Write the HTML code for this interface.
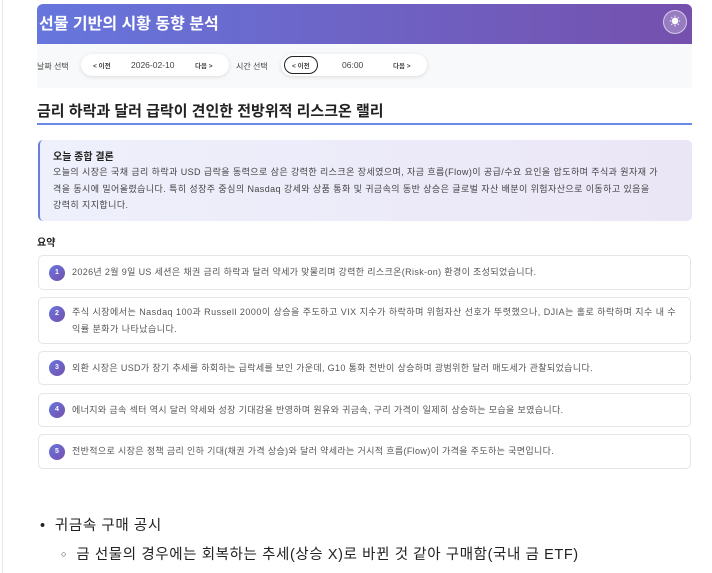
<!DOCTYPE html>
<html><head><meta charset="utf-8"><style>
*{box-sizing:border-box;margin:0;padding:0}
body{width:712px;height:573px;background:#fff;font-family:"Liberation Sans","Noto Sans CJK KR",sans-serif;position:relative;overflow:hidden;color:#333}
.lb{position:absolute;left:2px;top:0;bottom:0;width:1px;background:#e6e6e6}
.hdr{position:absolute;left:37px;top:4px;width:655px;height:40px;background:linear-gradient(90deg,#6676dd,#7550ad);border-radius:6px 6px 0 0;color:#fff;font-size:16px;font-weight:bold;padding:6px 0 0 2px}
.sun{position:absolute;right:5px;top:6px;width:24px;height:24px;border-radius:50%;background:rgba(255,255,255,.25);border:1px solid rgba(255,255,255,.6);color:#fff;font-size:11px;text-align:center;line-height:22px}
.bar{position:absolute;left:37px;top:44px;width:655px;height:44px;background:#f8f9fa;font-size:8px;color:#444}
.pill{position:absolute;top:10px;height:22px;background:#fff;border-radius:11px;box-shadow:0 1px 4px rgba(0,0,0,.12)}
.sm{position:absolute;top:6px;font-size:6.5px;font-weight:bold}
.h2{position:absolute;left:37px;top:100px;width:655px;height:25px;border-bottom:2px solid #6b8ae8;font-size:15px;font-weight:bold;color:#222}
.conc{position:absolute;left:38px;top:140px;width:654px;height:81px;background:linear-gradient(90deg,#eef0fc,#ebe6f6);border-left:2px solid #6a7ee0;border-radius:5px;padding:8px 0 0 13px}
.conc b{font-size:10px;color:#222;display:block;margin-bottom:1px}
.conc p{font-size:9px;letter-spacing:.42px;line-height:16.5px;color:#444;white-space:nowrap}
.yo{position:absolute;left:37px;top:234px;font-size:10px;font-weight:bold;color:#222}
.it{position:absolute;left:38px;width:653px;background:#fff;border:1px solid #e5e5e5;border-radius:5px;font-size:9px;letter-spacing:.35px;color:#555;line-height:17px;padding-left:33px}
.n{position:absolute;left:10px;width:16px;height:16px;border-radius:50%;background:linear-gradient(135deg,#6676dd,#7550ad);color:#fff;font-size:7px;text-align:center;line-height:16px;font-weight:bold;letter-spacing:0}
.bl{position:absolute;font-size:14.5px;letter-spacing:.6px;color:#222}
</style></head><body>
<div class="lb"></div>
<div class="hdr">선물 기반의 시황 동향 분석<div class="sun">☀</div></div>
<div class="bar">
<span style="position:absolute;left:0;top:17px">날짜 선택</span>
<div class="pill" style="left:44px;width:148px"><span class="sm" style="left:12px">&lt; 이전</span><span style="position:absolute;left:50px;top:6px;font-size:8.5px">2026-02-10</span><span class="sm" style="left:114px">다음 &gt;</span></div>
<span style="position:absolute;left:199px;top:17px">시간 선택</span>
<div class="pill" style="left:244px;width:146px"><span class="sm" style="left:3px;top:2px;border:1.5px solid #222;border-radius:9px;padding:3px 7px">&lt; 이전</span><span style="position:absolute;left:61px;top:6px;font-size:8.5px">06:00</span><span class="sm" style="left:112px">다음 &gt;</span></div>
</div>
<div class="h2">금리 하락과 달러 급락이 견인한 전방위적 리스크온 랠리</div>
<div class="conc"><b>오늘 종합 결론</b><p>오늘의 시장은 국채 금리 하락과 USD 급락을 동력으로 삼은 강력한 리스크온 장세였으며, 자금 흐름(Flow)이 공급/수요 요인을 압도하며 주식과 원자재 가<br>격을 동시에 밀어올렸습니다. 특히 성장주 중심의 Nasdaq 강세와 상품 통화 및 귀금속의 동반 상승은 글로벌 자산 배분이 위험자산으로 이동하고 있음을<br>강력히 지지합니다.</p></div>
<div class="yo">요약</div>
<div class="it" style="top:255px;height:35px;padding-top:8px"><span class="n" style="top:9px">1</span>2026년 2월 9일 US 세션은 채권 금리 하락과 달러 약세가 맞물리며 강력한 리스크온(Risk-on) 환경이 조성되었습니다.</div>
<div class="it" style="top:297px;height:47px;padding-top:6px;white-space:nowrap;letter-spacing:.47px"><span class="n" style="top:8px">2</span>주식 시장에서는 Nasdaq 100과 Russell 2000이 상승을 주도하고 VIX 지수가 하락하며 위험자산 선호가 뚜렷했으나, DJIA는 홀로 하락하며 지수 내 수<br>익률 분화가 나타났습니다.</div>
<div class="it" style="top:351px;height:34px;padding-top:8px"><span class="n" style="top:8px">3</span>외환 시장은 USD가 장기 추세를 하회하는 급락세를 보인 가운데, G10 통화 전반이 상승하며 광범위한 달러 매도세가 관찰되었습니다.</div>
<div class="it" style="top:393px;height:34px;padding-top:8px"><span class="n" style="top:8px">4</span>에너지와 금속 섹터 역시 달러 약세와 성장 기대감을 반영하며 원유와 귀금속, 구리 가격이 일제히 상승하는 모습을 보였습니다.</div>
<div class="it" style="top:434px;height:35px;padding-top:8px"><span class="n" style="top:9px">5</span>전반적으로 시장은 정책 금리 인하 기대(채권 가격 상승)와 달러 약세라는 거시적 흐름(Flow)이 가격을 주도하는 국면입니다.</div>
<div class="bl" style="left:40px;top:514px">•&nbsp;&nbsp;귀금속 구매 공시</div>
<div class="bl" style="left:61px;top:543px"><span style="font-size:9px;vertical-align:2px">○</span>&nbsp;&nbsp;금 선물의 경우에는 회복하는 추세(상승 X)로 바뀐 것 같아 구매함(국내 금 ETF)</div>
</body></html>
